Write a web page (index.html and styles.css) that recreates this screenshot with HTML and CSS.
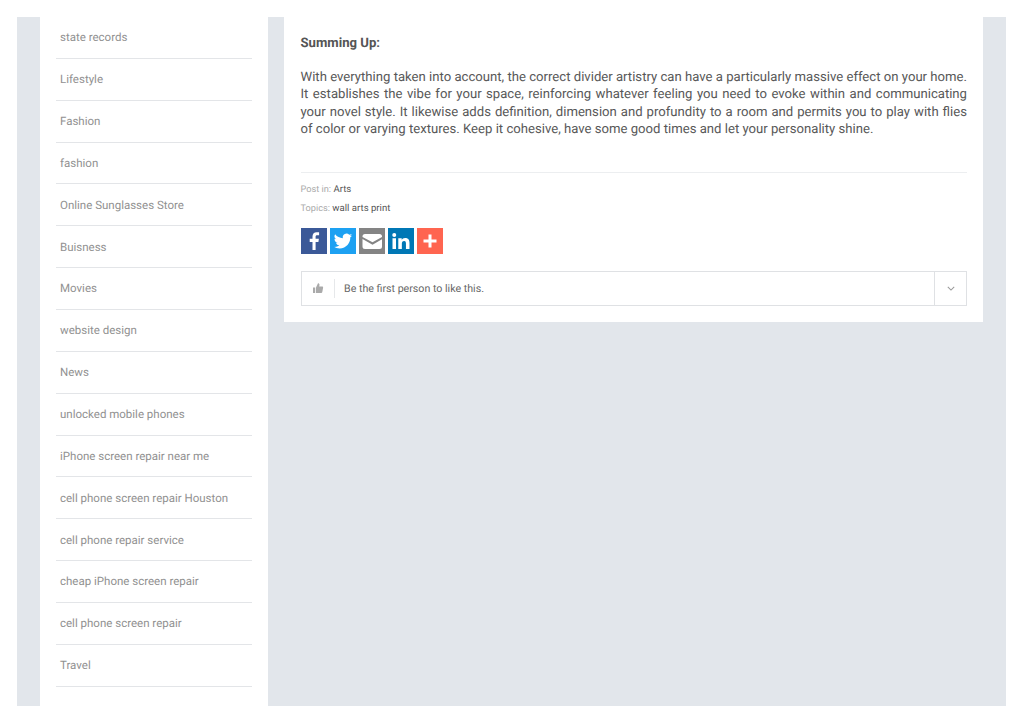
FILE: index.html
```html
<!DOCTYPE html>
<html lang="en">
<head>
    <meta charset="UTF-8">
    <title>Summing Up</title>
    <link rel="stylesheet" href="styles.css">
</head>
<body>

<div class="wrapper">
    <aside class="sidebar">
        <ul class="cat-list">
            <li>state records</li>
            <li>Lifestyle</li>
            <li>Fashion</li>
            <li>fashion</li>
            <li>Online Sunglasses Store</li>
            <li>Buisness</li>
            <li>Movies</li>
            <li>website design</li>
            <li>News</li>
            <li>unlocked mobile phones</li>
            <li>iPhone screen repair near me</li>
            <li>cell phone screen repair Houston</li>
            <li>cell phone repair service</li>
            <li>cheap iPhone screen repair</li>
            <li>cell phone screen repair</li>
            <li>Travel</li>
        </ul>
    </aside>

    <main class="post">
        <h4 class="post-heading">Summing Up:</h4>
        <p class="post-text">With everything taken into account, the correct divider artistry can have a particularly massive effect on your home. It establishes the vibe for your space, reinforcing whatever feeling you need to evoke within and communicating your novel style. It likewise adds definition, dimension and profundity to a room and permits you to play with flies of color or varying textures. Keep it cohesive, have some good times and let your personality shine.</p>

        <div class="post-meta">
            <div class="meta-line"><span class="meta-label">Post in:</span> Arts</div>
            <div class="meta-line"><span class="meta-label">Topics:</span> wall arts print</div>
        </div>

        <div class="share">
            <a class="share-btn facebook" href="#" aria-label="Facebook">
                <svg viewBox="0 0 26 26" width="26" height="26"><path fill="#fff" d="M14.6 22v-8h2.8l.5-3.2h-3.3V8.800c0-.95.3-1.600 1.650-1.600H18.100V4.350C17.800 4.300 16.800 4.200 15.650 4.200c-2.450 0-4.150 1.500-4.150 4.250v2.350H8.700V14h2.800v8z"/></svg>
            </a>
            <a class="share-btn twitter" href="#" aria-label="Twitter">
                <svg viewBox="0 0 24 24" width="22" height="22"><path fill="#fff" d="M22 5.900c-.75.330-1.540.550-2.360.650.850-.510 1.500-1.310 1.800-2.270-.790.470-1.670.810-2.610 1A4.100 4.100 0 0 0 11.840 9 11.650 11.650 0 0 1 3.390 4.710a4.100 4.100 0 0 0 1.270 5.480 4.080 4.080 0 0 1-1.860-.51v.05a4.100 4.100 0 0 0 3.290 4.020 4.100 4.100 0 0 1-1.850.07 4.110 4.110 0 0 0 3.830 2.850A8.230 8.230 0 0 1 2 18.370 11.610 11.610 0 0 0 8.290 20.200c7.550 0 11.670-6.250 11.670-11.670l-.01-.53A8.300 8.300 0 0 0 22 5.900z"/></svg>
            </a>
            <a class="share-btn email" href="#" aria-label="Email">
                <svg viewBox="0 0 26 26" width="26" height="26"><path fill="#fff" d="M6 6h14.500A2.500 2.500 0 0 1 23 8.500v.4l-9.500 5.400L3.500 8.900v-.4A2.500 2.500 0 0 1 6 6zM3.500 11l10 5.700 9.500-5.400v7.200a2.500 2.500 0 0 1-2.500 2.500H6a2.500 2.500 0 0 1-2.500-2.500z"/></svg>
            </a>
            <a class="share-btn linkedin" href="#" aria-label="LinkedIn">
                <svg viewBox="0 0 26 26" width="26" height="26"><path fill="#fff" d="M4.500 10.300h3.500V21H4.500zM6.250 5a2 2 0 1 1 0 4 2 2 0 0 1 0-4zM10.300 10.300h3.400v1.500h.05c.5-.9 1.650-1.800 3.350-1.800 3.550 0 4.400 2.250 4.400 5.200V21h-3.550v-5.200c0-1.250-.05-2.850-1.750-2.850-1.800 0-2.350 1.350-2.350 2.750V21h-3.550z"/></svg>
            </a>
            <a class="share-btn more" href="#" aria-label="More">
                <svg viewBox="0 0 26 26" width="26" height="26"><path fill="#fff" d="M11.500 6.500h3v5h5v3h-5v5h-3v-5h-5v-3h5z"/></svg>
            </a>
        </div>

        <div class="like-bar">
            <span class="like-icon">
                <svg viewBox="0 0 12 12" width="12" height="12"><path fill="#aaa" d="M1 5.500h2.200V11H1zM4 5.500 6 1.200c.9 0 1.500.6 1.500 1.500L7.200 4.600h3c.6 0 1 .5.900 1.100l-.8 4.300c-.1.600-.5 1-1.100 1H4z"/></svg>
            </span>
            <span class="like-text">Be the first person to like this.</span>
            <span class="like-toggle">
                <svg viewBox="0 0 10 6" width="8" height="5"><path fill="none" stroke="#999" stroke-width="1.300" d="M1 1l4 4 4-4"/></svg>
            </span>
        </div>
    </main>
</div>

</body>
</html>
```

FILE: styles.css
```css
body {
    margin: 0;
    padding: 17px 18px 17px 17px;
    background: #fff;
    font-family: Roboto, sans-serif;
    text-rendering: geometricPrecision;
}

.wrapper {
    display: flex;
    align-items: flex-start;
    height: 689px;
    padding: 0 23px;
    background: #e2e6eb;
}

.sidebar {
    flex: 0 0 228px;
    height: 100%;
    margin-right: 16px;
    padding: 0 16px;
    box-sizing: border-box;
    background: #fff;
}

.cat-list {
    margin: 0;
    padding: 0;
    list-style: none;
}

.cat-list li {
    height: 41.87px;
    box-sizing: border-box;
    padding: 12.3px 4px 0;
    border-bottom: 1px solid #e3e5e8;
    color: #919191;
    font-size: 11.5px;
    line-height: 16px;
}

.post {
    flex: 1;
    padding: 18px 16px 16px 16.5px;
    background: #fff;
}

.post-heading {
    margin: 0 0 16px;
    color: #555;
    font-size: 13.13px;
    font-weight: 700;
    line-height: 18px;
}

.post-text {
    margin: 0;
    padding-bottom: 33px;
    border-bottom: 1px solid #eceef0;
    color: #585858;
    font-size: 13.13px;
    line-height: 17.4px;
    text-align: justify;
}

.post-meta {
    padding-top: 7px;
}

.meta-line {
    color: #555;
    font-size: 9.6px;
    line-height: 19.6px;
}

.meta-label {
    color: #aaa;
    font-size: 9.2px;
}

.share {
    display: flex;
    gap: 3px;
    margin-top: 9px;
}

.share-btn {
    display: flex;
    align-items: center;
    justify-content: center;
    width: 26px;
    height: 26px;
}

.facebook { background: #3b5998; }
.twitter { background: #1da1f2; }
.email { background: #848484; }
.linkedin { background: #0077b5; }
.more { background: #ff6550; }

.like-bar {
    display: flex;
    align-items: center;
    height: 35px;
    box-sizing: border-box;
    margin-top: 17px;
    border: 1px solid #dfe1e4;
    color: #666;
    font-size: 10.65px;
}

.like-icon {
    display: flex;
    align-items: center;
    justify-content: center;
    width: 32px;
    height: 19px;
    border-right: 1px solid #e6e8ea;
}

.like-text {
    flex: 1;
    padding-left: 9.5px;
}

.like-toggle {
    display: flex;
    align-items: center;
    justify-content: center;
    width: 31px;
    height: 100%;
    border-left: 1px solid #dfe1e4;
}
```
